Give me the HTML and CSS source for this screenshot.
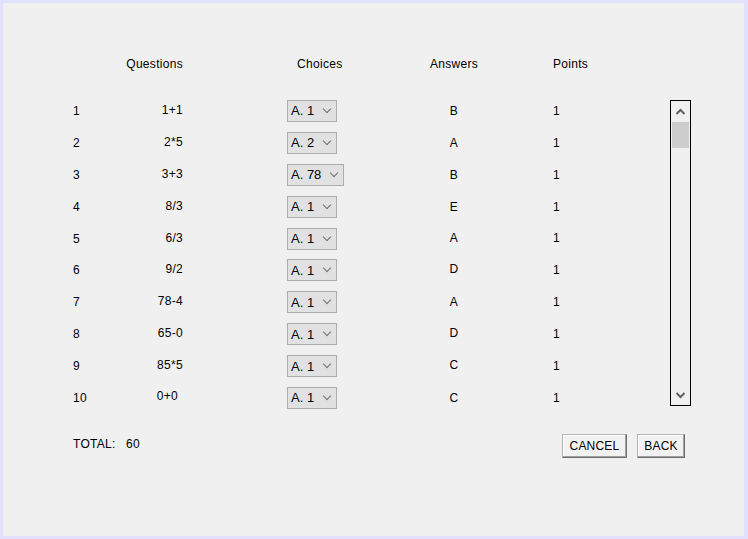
FILE: index.html
```html
<!DOCTYPE html>
<html>
<head>
<meta charset="utf-8">
<link rel="stylesheet" href="styles.css">
</head>
<body>
<div class="frame">
  <div class="table">
    <div class="hd c2 right">Questions</div>
    <div class="hd c4 choices-hd">Choices</div>
    <div class="hd c5 center">Answers</div>
    <div class="hd c7">Points</div>

    <div class="c1">1</div><div class="c2 right q">1+1</div><div class="c4"><span class="combo">A. 1<i class="chev"></i></span></div><div class="c5 center">B</div><div class="c7">1</div>
    <div class="c1">2</div><div class="c2 right q">2*5</div><div class="c4"><span class="combo">A. 2<i class="chev"></i></span></div><div class="c5 center">A</div><div class="c7">1</div>
    <div class="c1">3</div><div class="c2 right q">3+3</div><div class="c4"><span class="combo wide">A. 78<i class="chev"></i></span></div><div class="c5 center">B</div><div class="c7">1</div>
    <div class="c1">4</div><div class="c2 right q">8/3</div><div class="c4"><span class="combo">A. 1<i class="chev"></i></span></div><div class="c5 center">E</div><div class="c7">1</div>
    <div class="c1">5</div><div class="c2 right q">6/3</div><div class="c4"><span class="combo">A. 1<i class="chev"></i></span></div><div class="c5 center up">A</div><div class="c7 up">1</div>
    <div class="c1">6</div><div class="c2 right q">9/2</div><div class="c4"><span class="combo">A. 1<i class="chev"></i></span></div><div class="c5 center up">D</div><div class="c7">1</div>
    <div class="c1">7</div><div class="c2 right q">78-4</div><div class="c4"><span class="combo">A. 1<i class="chev"></i></span></div><div class="c5 center">A</div><div class="c7">1</div>
    <div class="c1">8</div><div class="c2 right q">65-0</div><div class="c4"><span class="combo">A. 1<i class="chev"></i></span></div><div class="c5 center up">D</div><div class="c7">1</div>
    <div class="c1">9</div><div class="c2 right q">85*5</div><div class="c4"><span class="combo">A. 1<i class="chev"></i></span></div><div class="c5 center up">C</div><div class="c7">1</div>
    <div class="c1">10</div><div class="c2 right q last">0+0</div><div class="c4"><span class="combo">A. 1<i class="chev"></i></span></div><div class="c5 center">C</div><div class="c7">1</div>

    <div class="scrollbar">
      <svg class="arrow" width="19" height="20" viewBox="0 0 19 20"><path d="M5.5 13 L9.5 9 L13.5 13" fill="none" stroke="#606060" stroke-width="2"/></svg>
      <div class="thumb"></div>
      <div class="track"></div>
      <svg class="arrow" width="19" height="20" viewBox="0 0 19 20"><path d="M5.5 8 L9.5 12 L13.5 8" fill="none" stroke="#606060" stroke-width="2"/></svg>
    </div>
  </div>

  <div class="footer">
    <span class="total-label">TOTAL:</span>
    <span class="total-val">60</span>
    <span class="spacer"></span>
    <button class="btn btn-cancel">CANCEL</button>
    <button class="btn btn-back">BACK</button>
  </div>
</div>
</body>
</html>
```
FILE: styles.css
```css
html, body {
  margin: 0;
  padding: 0;
  background: #e2e2fe;
}
.frame {
  box-sizing: border-box;
  width: 748px;
  height: 539px;
  border-style: solid;
  border-color: #e2e2fe;
  border-width: 3px 4px 3px 3px;
  background: #f0f0f0;
  padding: 44px 0 0 70px;
  font-family: "Liberation Sans", Arial, sans-serif;
  font-size: 12px;
  letter-spacing: 0.3px;
  color: #000;
}
.table {
  display: grid;
  grid-template-columns: 53px 57px 104px 113px 108px 45px 117px 21px;
  grid-template-rows: 48px repeat(10, 31.9px);
  align-items: center;
}
.hd {
  align-self: start;
  line-height: 32px;
  white-space: nowrap;
  position: relative;
  top: 1px;
}
.c1 { grid-column: 1; }
.c2 { grid-column: 2; }
.c4 { grid-column: 4; }
.c5 { grid-column: 5; }
.c7 { grid-column: 7; }
.right { text-align: right; }
.center { text-align: center; }
.choices-hd { padding-left: 10px; }
.q { position: relative; top: -1px; }
.q.last { top: -2px; padding-right: 5px; }
.up { position: relative; top: -1px; }

.combo {
  box-sizing: border-box;
  display: inline-flex;
  align-items: center;
  width: 50px;
  height: 22px;
  border: 1px solid #adadad;
  background: #e1e1e1;
  padding-left: 3px;
  font-size: 13px;
  letter-spacing: 0;
  color: #000;
  vertical-align: top;
}
.combo.wide { width: 57px; }
.chev {
  margin-left: auto;
  margin-right: 6px;
  width: 5px;
  height: 5px;
  border-right: 1px solid #707070;
  border-bottom: 1px solid #707070;
  transform: translateY(-2px) rotate(45deg);
}

.scrollbar {
  grid-column: 8;
  grid-row: 2 / span 10;
  align-self: start;
  margin-top: 5px;
  box-sizing: border-box;
  height: 306px;
  border: 1px solid #000;
  display: flex;
  flex-direction: column;
}
.arrow { display: block; flex: none; }
.thumb {
  flex: none;
  height: 26px;
  margin: 1px 1px 0 1px;
  background: #cdcdcd;
}
.track { flex: 1; }

.footer {
  display: flex;
  align-items: flex-start;
  margin-top: 20px;
  padding-right: 59px;
}
.total-label {
  width: 53px;
  line-height: 18px;
  position: relative;
  top: 1px;
}
.total-val { line-height: 18px; position: relative; top: 1px; }
.spacer { flex: 1; }
.btn {
  box-sizing: border-box;
  height: 24px;
  margin-left: 10px;
  padding: 0;
  font-family: "Liberation Sans", Arial, sans-serif;
  font-size: 12px;
  letter-spacing: 0.2px;
  color: #000;
  background: #f2f2f2;
  border: 1px solid #b4b4b4;
  border-right-color: #6e6e6e;
  border-bottom-color: #6e6e6e;
  box-shadow: inset -1px -1px 0 #a0a0a0, inset 1px 1px 0 #ffffff;
  border-radius: 0;
  text-align: center;
}
.btn-cancel { width: 65px; margin-left: 0; }
.btn-back { width: 48px; }
```
